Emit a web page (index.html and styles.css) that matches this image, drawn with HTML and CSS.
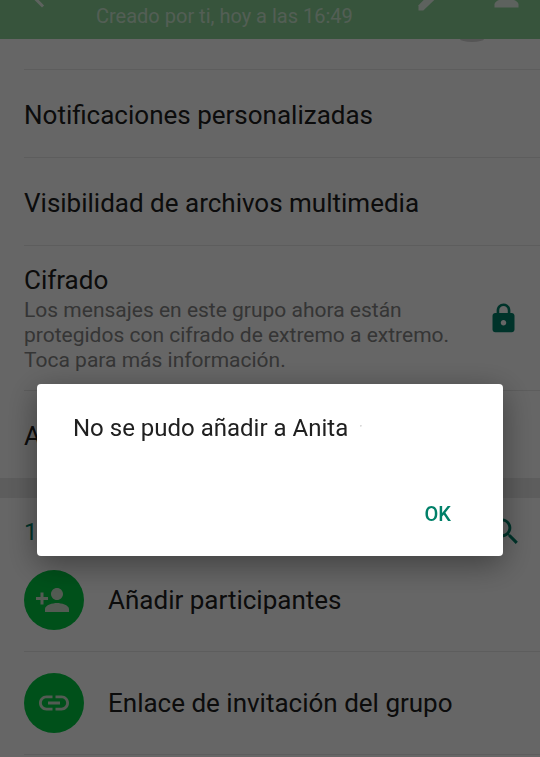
FILE: index.html
```
<!DOCTYPE html>
<html lang="es">
<head>
<meta charset="utf-8">
<meta name="viewport" content="width=device-width, initial-scale=1">
<title>Info. del grupo</title>
<link rel="stylesheet" href="styles.css">
</head>
<body>
<header class="bar">
  <button class="icon-button" aria-label="Atrás"><svg class="bar-icon" viewBox="0 15 24 10"><path d="M20 11H7.83l5.59-5.59L12 4l-8 8 8 8 1.41-1.41L7.83 13H20v-2z"/></svg></button>
  <p class="created">Creado por ti, hoy a las 16:49</p>
  <button class="icon-button" aria-label="Editar"><svg class="bar-icon" viewBox="0 14 24 10"><path d="M3 17.5V21h3.2L17.800 9.900l-3.700-3.700z"/></svg></button>
  <button class="icon-button" aria-label="Añadir participante"><svg class="bar-icon" viewBox="0 15 24 10"><path d="M15 14c-2.670 0-8 1.340-8 4v2h16v-2c0-2.660-5.330-4-8-4z"/></svg></button>
</header>
<main>
  <div class="mute"><span class="knob"></span></div>
  <button class="row">Notificaciones personalizadas</button>
  <button class="row">Visibilidad de archivos multimedia</button>
  <button class="row row-detail">
    <span class="detail">
      <span class="title">Cifrado</span>
      <span class="note">Los mensajes en este grupo ahora están protegidos con cifrado de extremo a extremo. Toca para más información.</span>
    </span>
    <svg class="lock" viewBox="0 0 24 24" aria-hidden="true"><path fill-rule="evenodd" d="M18 8h-1V6c0-2.760-2.240-5-5-5S7 3.240 7 6v2H6c-1.100 0-2 .9-2 2v10c0 1.100.9 2 2 2h12c1.100 0 2-.9 2-2V10c0-1.100-.9-2-2-2zm-6 9c-1.100 0-2-.9-2-2s.9-2 2-2 2 .9 2 2-.9 2-2 2zm3.100-9H8.900V6c0-1.710 1.390-3.100 3.100-3.100s3.100 1.390 3.100 3.100v2z"/></svg>
  </button>
  <button class="row row-last">A</button>
  <section class="members">
    <div class="members-head">
      <h2 class="count">1</h2>
      <button class="icon-button" aria-label="Buscar"><svg class="search" viewBox="0 0 24 24"><path d="M15.500 14h-.79l-.28-.27C15.410 12.590 16 11.110 16 9.500 16 5.910 13.090 3 9.500 3S3 5.910 3 9.500 5.910 16 9.500 16c1.610 0 3.090-.59 4.230-1.570l.27.28v.79l5 4.990L20.490 19l-4.990-5zm-6 0C7.010 14 5 11.990 5 9.500S7.010 5 9.500 5 14 7.010 14 9.500 11.990 14 9.500 14z"/></svg></button>
    </div>
    <button class="row row-action">
      <span class="disc"><svg viewBox="1 0 24 24" aria-hidden="true"><path d="M15 12c2.210 0 4-1.790 4-4s-1.790-4-4-4-4 1.790-4 4 1.790 4 4 4zm-9-2V7H4v3H1v2h3v3h2v-3h3v-2H6zm9 4c-2.670 0-8 1.340-8 4v2h16v-2c0-2.660-5.330-4-8-4z"/></svg></span>
      Añadir participantes
    </button>
    <button class="row row-action">
      <span class="disc"><svg viewBox="0 0 24 24" aria-hidden="true"><path d="M3.900 12c0-1.710 1.390-3.100 3.100-3.100h4V7H7c-2.760 0-5 2.240-5 5s2.240 5 5 5h4v-1.900H7c-1.710 0-3.100-1.390-3.100-3.100zM8 13h8v-2H8v2zm9-6h-4v1.900h4c1.710 0 3.100 1.390 3.100 3.100s-1.390 3.100-3.100 3.100h-4V17h4c2.760 0 5-2.240 5-5s-2.240-5-5-5z"/></svg></span>
      Enlace de invitación del grupo
    </button>
  </section>
</main>
<div class="scrim">
  <div class="dialog" role="alertdialog" aria-modal="true" aria-labelledby="message">
    <p class="message" id="message">No se pudo añadir a Anita <span class="tick">'</span></p>
    <button class="ok">OK</button>
  </div>
</div>
</body>
</html>
```
FILE: styles.css
```
* {
  box-sizing: border-box;
}

body {
  margin: 0;
  background: #fff;
  color: #202020;
  font-family: Roboto, "Noto Sans", sans-serif;
  font-size: 26px;
  line-height: 32px;
}

button {
  padding: 0;
  border: 0;
  background: none;
  color: inherit;
  font: inherit;
  text-align: left;
}

svg {
  display: block;
  fill: currentColor;
}

.bar {
  display: flex;
  align-items: flex-start;
  padding: 0 20px 11px 24px;
  background: #8ad296;
  color: rgba(255, 255, 255, 0.8);
}

.icon-button {
  flex: none;
}

.bar-icon {
  width: 36px;
  height: 15px;
}

.created {
  flex: 1;
  margin: 0 0 0 36px;
  padding-top: 4px;
  color: rgba(255, 255, 255, 0.6);
  font-size: 20px;
  line-height: 24px;
}

.bar .icon-button + .icon-button {
  margin-left: 34px;
}

.mute {
  display: flex;
  justify-content: flex-end;
  height: 31px;
  margin-left: 24px;
  padding-right: 56px;
  border-bottom: 1px solid #e8e8e8;
}

.knob {
  width: 24px;
  height: 3px;
  border-radius: 0 0 50% 50% / 0 0 100% 100%;
  background: #d4d4d4;
}

.row {
  display: flex;
  align-items: center;
  width: calc(100% - 24px);
  min-height: 88px;
  margin-left: 24px;
  padding-top: 2px;
  border-bottom: 1px solid #e8e8e8;
}

.row-detail {
  justify-content: space-between;
  min-height: 145px;
  padding: 0 20px 0 0;
}

.detail {
  max-width: 436px;
}

.title,
.note {
  display: block;
}

.note {
  margin-top: 2px;
  color: #858585;
  font-size: 21px;
  line-height: 25px;
}

.lock {
  flex: none;
  width: 33px;
  height: 33px;
  color: #008069;
}

.row-last {
  min-height: 87px;
  border-bottom: 0;
}

.members {
  border-top: 20px solid #e9e9e9;
}

.members-head {
  display: flex;
  align-items: center;
  justify-content: space-between;
  min-height: 51px;
  padding: 16px 17px 0 24px;
  color: #008069;
}

.count {
  margin: 0;
  font-size: 24px;
  font-weight: 400;
}

.search {
  width: 35px;
  height: 35px;
}

.row-action {
  gap: 24px;
  min-height: 103px;
  padding-top: 0;
}

.disc {
  display: flex;
  flex: none;
  align-items: center;
  justify-content: center;
  width: 60px;
  height: 60px;
  border-radius: 50%;
  background: #00c943;
  color: #cfe4d0;
}

.disc svg {
  width: 36px;
  height: 36px;
}

.scrim {
  position: fixed;
  inset: 0;
  display: flex;
  align-items: center;
  justify-content: center;
  padding: 183px 37px 0;
  background: rgba(0, 0, 0, 0.6);
}

.dialog {
  display: flex;
  flex: 1;
  flex-direction: column;
  align-items: flex-start;
  gap: 50px;
  padding: 28px 36px 22px;
  border-radius: 4px;
  background: #fff;
  box-shadow: 0 8px 32px rgba(0, 0, 0, 0.4);
}

.message {
  margin: 0;
  font-size: 24px;
}

.tick {
  margin-left: 6px;
  color: #999;
  font-size: 8px;
  vertical-align: 6px;
}

.ok {
  align-self: flex-end;
  padding: 4px 16px;
  color: #008069;
  font-size: 20px;
  font-weight: 500;
  line-height: 32px;
}
```
